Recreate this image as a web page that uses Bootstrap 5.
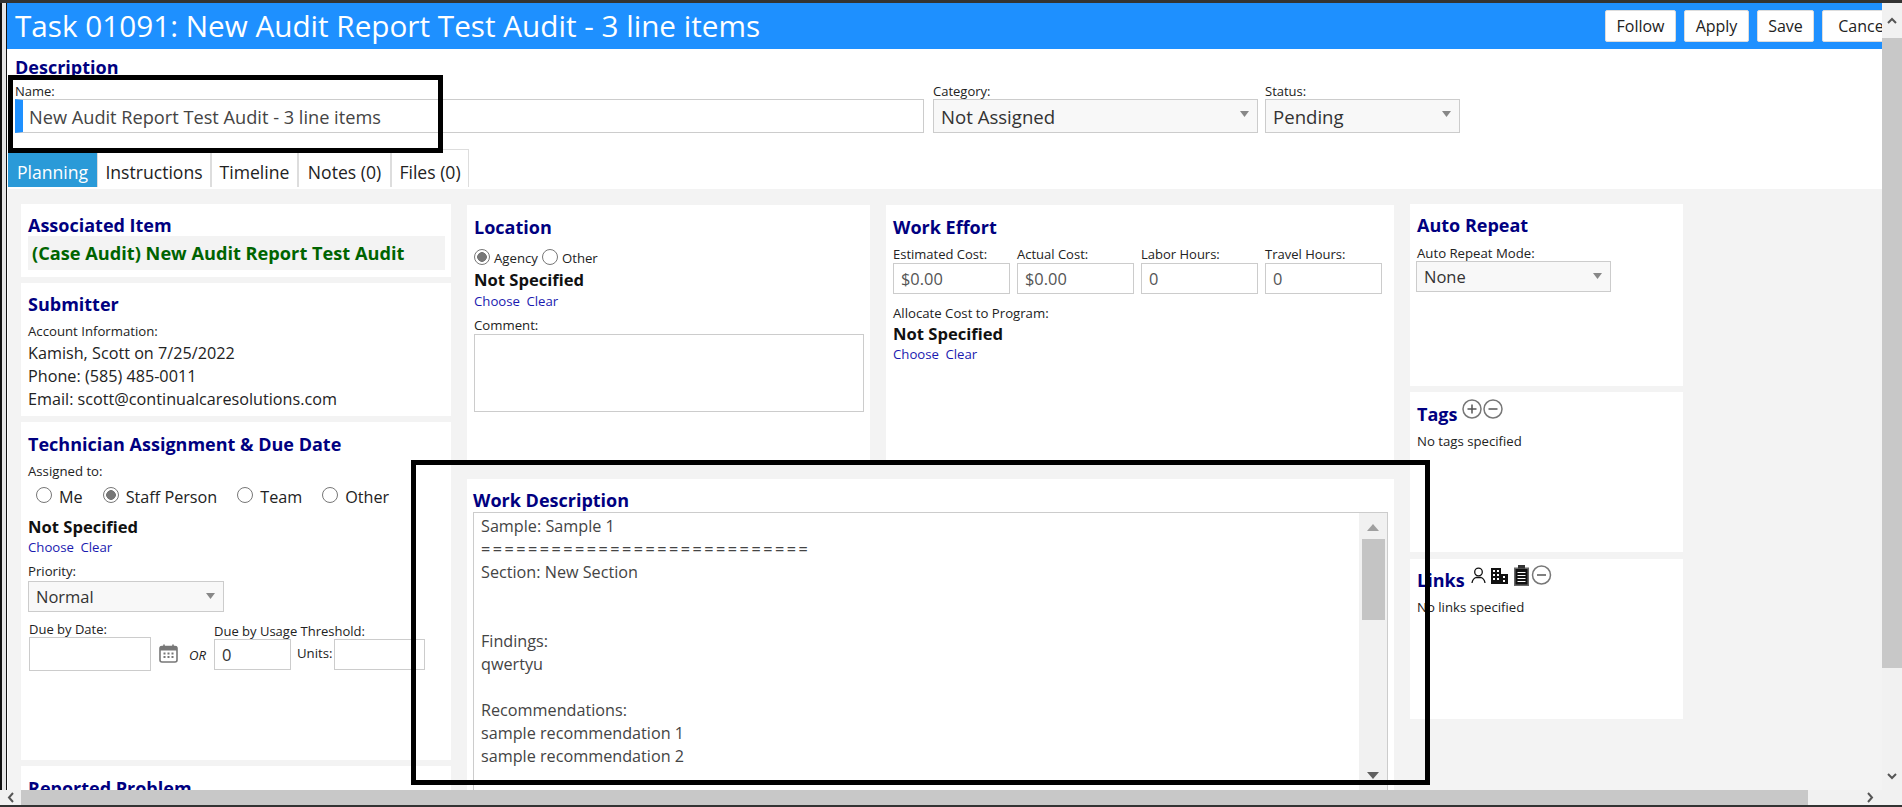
<!DOCTYPE html>
<html lang="en">

<head>
  <meta charset="UTF-8">
  <meta name="viewport" content="width=device-width, initial-scale=1.0">
  <title>Task 01091</title>
  <link href="https://cdn.jsdelivr.net/npm/bootstrap@5.3.3/dist/css/bootstrap.min.css" rel="stylesheet">
  <style>
    html, body { height: 100%; overflow: hidden; }
    body {
      font-family: "Open Sans", "Liberation Sans", sans-serif;
      font-size: 13px;
      color: #222;
      background: #fff;
    }
    .shell { width: 1902px; height: 807px; position: relative; display: flex; flex-direction: column; border-top: 3px solid #333; border-bottom: 2px solid #333; }
    .shell-mid { flex: 1; display: flex; min-height: 0; }
    .edge { width: 7px; flex: none; background: #e4e4e4; border-left: 2px solid #111; border-right: 1px solid #111; }
    .page { width: 1875px; flex: none; overflow: hidden; display: flex; flex-direction: column; }

    .title-bar { height: 46px; flex: none; background: #1e90ff; color: #fff; display: flex; align-items: center; padding-left: 8px; white-space: nowrap; }
    .title-bar h1 { font-size: 29.7px; font-weight: 400; margin: 0; flex: 1; font-family: "Open Sans", sans-serif; }
    .title-btns { display: flex; gap: 8px; margin-right: -22px; flex: none; }
    .title-btns .btn { font-size: 16px; height: 32px; padding: 0; background: #fff; color: #222; border: 1px solid #ddd; border-radius: 2px; font-family: "Open Sans", sans-serif; }
    .b-follow { width: 71px; } .b-apply { width: 65px; } .b-save { width: 57px; } .b-cancel { width: 82px; }

    .head-sec { height: 100px; flex: none; padding: 7px 0 0 8px; }
    .sec-title { color: #000080; font-weight: 700; font-size: 18px; line-height: 22px; margin: 0; font-family: "Open Sans", sans-serif; }
    .fields { display: flex; margin-top: 6px; }
    .fld-lbl { font-size: 13px; line-height: 14px; display: block; margin: 0 0 1px; color: #222; white-space: nowrap; }
    .name-fld { width: 909px; margin-right: 9px; }
    .cat-fld { width: 325px; margin-right: 7px; }
    .stat-fld { width: 195px; }
    .plain-in.form-control, .plain-sel.form-select {
      border: 1px solid #ccc; border-radius: 0; box-shadow: none; padding: 0 0 0 7px;
      font-family: "Open Sans", sans-serif; color: #333; font-size: 16.5px; min-height: 0;
    }
    .plain-in.form-control { background-color: #fff; }
    .plain-sel.form-select {
      background-color: #f8f8f8;
      background-image: url("data:image/svg+xml,%3Csvg xmlns='http://www.w3.org/2000/svg' viewBox='0 0 12 8'%3E%3Cpath fill='%23888888' d='M0 0h12L6 8z'/%3E%3C/svg%3E");
      background-size: 11px 6px; background-position: right 7px top 11px;
    }
    .h34 { height: 34px; }
    .h31 { height: 31px; }
    .name-in.form-control { border-left: 8px solid #1e90ff; padding: 2px 0 0 6px; color: #444; font-size: 18.2px; }
    .sel-big.form-select { font-size: 18.6px; padding-top: 2px; }

    .tab-row { display: flex; height: 38px; flex: none; margin-left: 1px; font-size: 17.6px; }
    .tab-item { border: 1px solid #ddd; border-bottom: 0; display: flex; align-items: center; justify-content: center; color: #222; padding-top: 7px; white-space: nowrap; }
    .tab-item.is-on { background: #2a9ad8; color: #fff; border-color: #2a9ad8; }
    .t1 { width: 89px; } .t2 { width: 114px; } .t3 { width: 87px; } .t4 { width: 93px; } .t5 { width: 78px; }

    .work-area { flex: 1; min-height: 0; margin: 2px 0 0 1px; background: #f3f3f3; padding: 15px 0 0 13px; display: flex; gap: 16px; align-items: flex-start; overflow: hidden; }
    .panel { background: #fff; padding: 0 7px; }
    .panel h2 { color: #000080; font-weight: 700; font-size: 18px; margin: 0; line-height: 22px; font-family: "Open Sans", sans-serif; white-space: nowrap; }
    .col-left { width: 430px; flex: none; display: flex; flex-direction: column; gap: 6px; }
    .col-mid { width: 927px; flex: none; display: flex; flex-direction: column; gap: 19px; padding-top: 1px; }
    .mid-top { display: flex; gap: 16px; }
    .col-right { width: 273px; flex: none; display: flex; flex-direction: column; gap: 6px; }

    .p-assoc { height: 73px; padding-top: 10px; }
    .assoc-box { background: #f3f3f3; height: 34px; line-height: 34px; padding-left: 4px; color: #006400; font-weight: 700; font-size: 18.2px; margin: 0 -1px 0 0; white-space: nowrap; }
    .p-sub { height: 133px; padding-top: 10px; }
    .small-lbl { font-size: 13.2px; line-height: 15px; color: #222; white-space: nowrap; }
    .sub-lbl { margin-top: 9px; margin-bottom: 3px; }
    .txt-line { font-size: 16.2px; line-height: 23px; color: #222; white-space: nowrap; }
    .p-tech { height: 338px; padding-top: 11px; }
    .assign-lbl { margin-top: 9px; }
    .radio-row { display: flex; align-items: center; font-size: 16.2px; line-height: 22px; white-space: nowrap; }
    .radio-row .form-check-input { width: 16px; height: 16px; margin: -5px 7px 0 0; border: 1px solid #777; background-color: #fff; box-shadow: none; flex: none; }
    .radio-row .form-check-input:checked { background-color: #fff; border-color: #777; background-image: radial-gradient(circle, #777 0 4.6px, transparent 5px); }
    .gap-r { margin-right: 20px; }
    .tech-radios { margin-top: 7px; padding-left: 8px; }
    .loc-radios { margin-top: 6px; }
    .loc-radios .form-check-input { margin: 0 4px 0 0; }
    .loc-radios .small-lbl { margin-right: 4px; line-height: 22px; padding-top: 3px; }
    .not-spec { font-weight: 700; font-size: 16.6px; color: #111; line-height: 21px; white-space: nowrap; }
    .tech-ns { margin-top: 8px; }
    .eff-ns { margin-top: 2px; }
    .act-links { font-size: 13.2px; line-height: 17px; white-space: nowrap; }
    .act-links a { color: #1a1ab0; text-decoration: none; margin-right: 3px; }
    .tech-act { margin-top: 2px; }
    .loc-act { margin-top: 3px; }
    .eff-act { margin-top: 2px; }
    .due-sel.form-select { width: 196px; margin-top: 2px; padding-top: 1px; }
    .due-row { display: flex; align-items: flex-start; margin-top: 10px; padding-left: 1px; }
    .due-a { width: 122px; flex: none; }
    .due-date.form-control { width: 122px; height: 34px; }
    .cal-ic { margin: 22px 0 0 8px; flex: none; }
    .or-txt { margin: 24px 7px 0 11px; font-style: italic; font-size: 13.2px; line-height: 18px; width: 18px; flex: none; }
    .due-b { margin-top: 2px; flex: none; }
    .due-num.form-control { width: 77px; height: 31px; flex: none; }
    .units-lbl { width: 37px; margin-left: 6px; margin-top: 5px; font-size: 13.2px; flex: none; }
    .due-units.form-control { width: 91px; height: 31px; flex: none; }
    .p-problem { height: 60px; padding-top: 11px; }

    .p-loc { width: 403px; height: 255px; padding-top: 11px; }
    .p-eff { width: 508px; height: 255px; padding-top: 11px; }
    .eff-grid { display: flex; gap: 7px; margin-top: 9px; }
    .eff-grid > div { width: 117px; }
    .eff-grid .fld-lbl { margin-bottom: 2px; }
    .eff-in.form-control { color: #555; font-size: 16.4px; }
    .p-desc { height: 330px; padding: 10px 7px 0 6px; }
    .desc-box { display: flex; border: 1px solid #ccc; height: 300px; margin-right: -1px; margin-top: 1px; }
    .desc-text { flex: 1; padding: 2px 7px; font-size: 16.2px; line-height: 23px; color: #444; white-space: pre; }
    .eq-line { letter-spacing: 2.5px; }
    .inner-scroll { width: 28px; background: #f1f1f1; display: flex; flex-direction: column; align-items: center; }
    .inner-thumb { width: 23px; height: 81px; background: #c4c4c4; margin-top: 8px; }
    .tri-up, .tri-dn { width: 0; height: 0; border-left: 6px solid transparent; border-right: 6px solid transparent; }
    .tri-up { border-bottom: 7px solid #a0a0a0; margin-top: 11px; }
    .tri-dn { border-top: 7px solid #606060; margin-top: 152px; }

    .p-rep { height: 182px; padding-top: 10px; }
    .rep-lbl { margin-top: 10px; }
    .rep-sel.form-select { width: 195px; margin-left: -1px; padding-top: 1px; }
    .p-tags { height: 160px; padding-top: 9px; }
    .p-links { height: 160px; padding-top: 8px; margin-top: 1px; }
    .head-icons { display: flex; align-items: flex-start; }
    .head-icons h2 { margin-top: 2px; margin-right: 5px; }
    .links-head h2 { margin-right: 4px; }
    .head-icons svg { margin-top: -2px; flex: none; }
    .tag-note { margin-top: 9px; }

    .comment-in.form-control { height: 78px; width: 390px; resize: none; margin-top: 1px; }

    .v-scroll { width: 20px; flex: none; background: #f1f1f1; display: flex; flex-direction: column; align-items: center; }
    .v-btn { height: 35px; flex: none; display: flex; align-items: center; justify-content: center; }
    .v-thumb { width: 20px; height: 630px; background: #c8c8c8; flex: none; }
    .v-btn.down { margin-top: auto; height: 28px; }
    .h-scroll { height: 15px; flex: none; display: flex; background: #f1f1f1; align-items: center; }
    .h-btn { width: 21px; display: flex; justify-content: center; flex: none; }
    .h-thumb { width: 1787px; height: 15px; background: #c8c8c8; flex: none; }
    .h-btn.right { margin-left: 52px; }

    .note-box { position: absolute; border: 5px solid #000; pointer-events: none; }
    .note-a { left: 8px; top: 72px; width: 435px; height: 78px; }
    .note-b { left: 411px; top: 457px; width: 1019px; height: 325px; }
  </style>
  <link rel="icon" href="data:;base64,iVBORw0KGgo=">
</head>

<body>
  <div class="shell">
    <div class="shell-mid">
      <div class="edge"></div>
      <div class="page">
        <div class="title-bar">
          <h1>Task 01091: New Audit Report Test Audit - 3 line items</h1>
          <div class="title-btns">
            <button type="button" class="btn b-follow">Follow</button>
            <button type="button" class="btn b-apply">Apply</button>
            <button type="button" class="btn b-save">Save</button>
            <button type="button" class="btn b-cancel">Cancel</button>
          </div>
        </div>

        <div class="head-sec">
          <h2 class="sec-title">Description</h2>
          <div class="fields">
            <div class="name-fld">
              <label class="fld-lbl">Name:</label>
              <input type="text" class="form-control plain-in name-in h34" value="New Audit Report Test Audit - 3 line items">
            </div>
            <div class="cat-fld">
              <label class="fld-lbl">Category:</label>
              <select class="form-select plain-sel sel-big h34"><option>Not Assigned</option></select>
            </div>
            <div class="stat-fld">
              <label class="fld-lbl">Status:</label>
              <select class="form-select plain-sel sel-big h34"><option>Pending</option></select>
            </div>
          </div>
        </div>

        <div class="tab-row">
          <div class="tab-item t1 is-on">Planning</div>
          <div class="tab-item t2">Instructions</div>
          <div class="tab-item t3">Timeline</div>
          <div class="tab-item t4">Notes (0)</div>
          <div class="tab-item t5">Files (0)</div>
        </div>

        <div class="work-area">
          <div class="col-left">
            <div class="panel p-assoc">
              <h2>Associated Item</h2>
              <div class="assoc-box">(Case Audit) New Audit Report Test Audit</div>
            </div>
            <div class="panel p-sub">
              <h2>Submitter</h2>
              <div class="small-lbl sub-lbl">Account Information:</div>
              <div class="txt-line">Kamish, Scott on 7/25/2022</div>
              <div class="txt-line">Phone: (585) 485-0011</div>
              <div class="txt-line">Email: scott@continualcaresolutions.com</div>
            </div>
            <div class="panel p-tech">
              <h2>Technician Assignment &amp; Due Date</h2>
              <div class="small-lbl assign-lbl">Assigned to:</div>
              <div class="radio-row tech-radios">
                <input class="form-check-input" type="radio" name="who"><span class="gap-r">Me</span>
                <input class="form-check-input" type="radio" name="who" checked><span class="gap-r">Staff Person</span>
                <input class="form-check-input" type="radio" name="who"><span class="gap-r">Team</span>
                <input class="form-check-input" type="radio" name="who"><span>Other</span>
              </div>
              <div class="not-spec tech-ns">Not Specified</div>
              <div class="act-links tech-act"><a href="#">Choose</a> <a href="#">Clear</a></div>
              <div class="small-lbl mt-2">Priority:</div>
              <select class="form-select plain-sel h31 due-sel"><option>Normal</option></select>
              <div class="due-row">
                <div class="due-a">
                  <label class="fld-lbl">Due by Date:</label>
                  <input type="text" class="form-control plain-in due-date">
                </div>
                <svg class="cal-ic" width="19" height="19" viewBox="0 0 19 19">
                  <rect x="1" y="2.5" width="17" height="15.5" rx="2" fill="none" stroke="#777" stroke-width="1.6"/>
                  <rect x="1" y="2.5" width="17" height="4" fill="#777"/>
                  <path d="M5 .5v3.5M14 .5v3.5" stroke="#777" stroke-width="1.6"/>
                  <path d="M4.5 8.5h2v2h-2zM8.5 8.5h2v2h-2zM12.5 8.5h2v2h-2zM4.5 12h2v2h-2zM8.5 12h2v2h-2zM12.5 12h2v2h-2z" fill="#777"/>
                </svg>
                <span class="or-txt">OR</span>
                <div class="due-b">
                  <label class="fld-lbl">Due by Usage Threshold:</label>
                  <div class="d-flex align-items-start">
                    <input type="text" class="form-control plain-in due-num" value="0">
                    <span class="units-lbl">Units:</span>
                    <input type="text" class="form-control plain-in due-units">
                  </div>
                </div>
              </div>
            </div>
            <div class="panel p-problem">
              <h2>Reported Problem</h2>
            </div>
          </div>

          <div class="col-mid">
            <div class="mid-top">
              <div class="panel p-loc">
                <h2>Location</h2>
                <div class="radio-row loc-radios">
                  <input class="form-check-input" type="radio" name="loc" checked><span class="small-lbl">Agency</span>
                  <input class="form-check-input" type="radio" name="loc"><span class="small-lbl">Other</span>
                </div>
                <div class="not-spec">Not Specified</div>
                <div class="act-links loc-act"><a href="#">Choose</a> <a href="#">Clear</a></div>
                <div class="small-lbl mt-2">Comment:</div>
                <textarea class="form-control plain-in comment-in"></textarea>
              </div>
              <div class="panel p-eff">
                <h2>Work Effort</h2>
                <div class="eff-grid">
                  <div><label class="fld-lbl">Estimated Cost:</label><input type="text" class="form-control plain-in eff-in h31" value="$0.00"></div>
                  <div><label class="fld-lbl">Actual Cost:</label><input type="text" class="form-control plain-in eff-in h31" value="$0.00"></div>
                  <div><label class="fld-lbl">Labor Hours:</label><input type="text" class="form-control plain-in eff-in h31" value="0"></div>
                  <div><label class="fld-lbl">Travel Hours:</label><input type="text" class="form-control plain-in eff-in h31" value="0"></div>
                </div>
                <div class="small-lbl mt-2 pt-1">Allocate Cost to Program:</div>
                <div class="not-spec eff-ns">Not Specified</div>
                <div class="act-links eff-act"><a href="#">Choose</a> <a href="#">Clear</a></div>
              </div>
            </div>
            <div class="panel p-desc">
              <h2>Work Description</h2>
              <div class="desc-box">
                <div class="desc-text">Sample: Sample 1
<span class="eq-line">============================</span>
Section: New Section


Findings:
qwertyu

Recommendations:
sample recommendation 1
sample recommendation 2</div>
                <div class="inner-scroll">
                  <div class="tri-up"></div>
                  <div class="inner-thumb"></div>
                  <div class="tri-dn"></div>
                </div>
              </div>
            </div>
          </div>

          <div class="col-right">
            <div class="panel p-rep">
              <h2>Auto Repeat</h2>
              <div class="small-lbl rep-lbl">Auto Repeat Mode:</div>
              <select class="form-select plain-sel h31 rep-sel"><option>None</option></select>
            </div>
            <div class="panel p-tags">
              <div class="head-icons">
                <h2>Tags</h2>
                <svg width="42" height="22" viewBox="0 0 42 22" fill="none" stroke="#777" stroke-width="1.5">
                  <circle cx="10" cy="10" r="9"/><path d="M10 5.5v9M5.5 10h9" stroke="#555"/>
                  <circle cx="31" cy="10" r="9"/><path d="M26.5 10h9" stroke="#555"/>
                </svg>
              </div>
              <div class="small-lbl tag-note">No tags specified</div>
            </div>
            <div class="panel p-links">
              <div class="head-icons links-head">
                <h2>Links</h2>
                <svg width="84" height="22" viewBox="0 0 84 22">
                  <circle cx="9.500" cy="7" r="3.800" fill="none" stroke="#111" stroke-width="1.300"/>
                  <path d="M3 18c.5-3.500 2.500-5 4-5.500h5c1.500.5 3.500 2 4 5.500" fill="none" stroke="#111" stroke-width="1.300"/>
                  <path d="M22 3h10v6h7v10H22z" fill="#111"/>
                  <path d="M24 5h2v2h-2zM28 5h2v2h-2zM24 9h2v2h-2zM28 9h2v2h-2zM24 13h2v2h-2zM28 13h2v2h-2zM34 11h2v2h-2zM34 15h2v2h-2z" fill="#fff"/>
                  <rect x="45" y="2.500" width="15" height="18.500" fill="#666"/>
                  <rect x="46.500" y="4" width="12" height="15.500" fill="#111"/>
                  <path d="M49 0h7v3.500h-7z" fill="#333"/>
                  <path d="M48.500 7.500h8M48.500 10.500h8M48.500 13.500h8M48.500 16.500h8" stroke="#fff" stroke-width="1"/>
                  <circle cx="72.500" cy="10" r="9" fill="none" stroke="#777" stroke-width="1.500"/>
                  <path d="M68 10h9" stroke="#555" stroke-width="1.500"/>
                </svg>
              </div>
              <div class="small-lbl tag-note">No links specified</div>
            </div>
          </div>
        </div>
      </div>
      <div class="v-scroll">
        <div class="v-btn">
          <svg width="10" height="7" viewBox="0 0 10 7" fill="none" stroke="#555" stroke-width="2"><path d="M1 6l4-4 4 4"/></svg>
        </div>
        <div class="v-thumb"></div>
        <div class="v-btn down">
          <svg width="10" height="7" viewBox="0 0 10 7" fill="none" stroke="#555" stroke-width="2"><path d="M1 1l4 4 4-4"/></svg>
        </div>
      </div>
    </div>
    <div class="h-scroll">
      <div class="h-btn">
        <svg width="7" height="11" viewBox="0 0 7 11" fill="none" stroke="#555" stroke-width="2"><path d="M6 1L2 5.500l4 4.500"/></svg>
      </div>
      <div class="h-thumb"></div>
      <div class="h-btn right">
        <svg width="7" height="11" viewBox="0 0 7 11" fill="none" stroke="#555" stroke-width="2"><path d="M1 1l4 4.500-4 4.500"/></svg>
      </div>
    </div>

    <!-- annotation boxes from the screenshot -->
    <div class="note-box note-a"></div>
    <div class="note-box note-b"></div>
  </div>

  <script src="https://cdn.jsdelivr.net/npm/bootstrap@5.3.3/dist/js/bootstrap.bundle.min.js"></script>
</body>

</html>
